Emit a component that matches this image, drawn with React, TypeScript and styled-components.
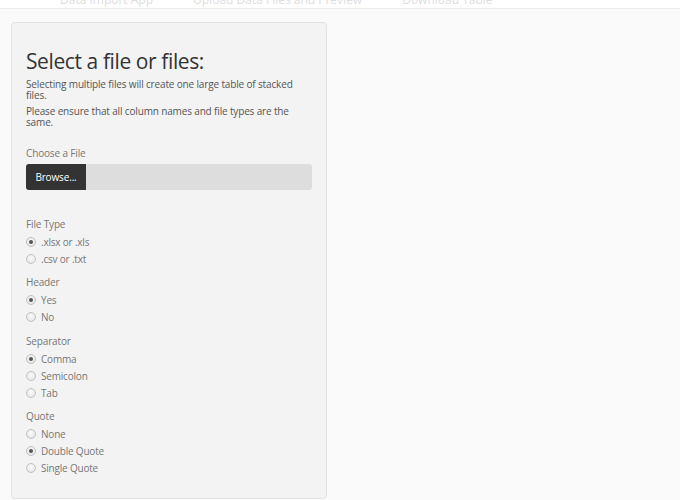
import React from "react";
import styled, { createGlobalStyle } from "styled-components";

const Global = createGlobalStyle`
  html, body { margin: 0; padding: 0; }
  body {
    background: #fafafa;
    font-family: "Open Sans", "Liberation Sans", sans-serif;
    color: #777;
    width: 680px;
    height: 500px;
    overflow: hidden;
  }
`;

const NavBar = styled.div`
  height: 8px;
  background: #ffffff;
  border-bottom: 1px solid #ebebeb;
  overflow: hidden;
  display: flex;
  align-items: flex-end;
  gap: 40px;
  padding-left: 60px;
`;

const NavText = styled.span`
  font-size: 12px;
  line-height: 12px;
  color: #dedede;
  margin-bottom: 2px;
  white-space: nowrap;
`;

const Page = styled.div`
  padding: 13px 0 0 11px;
`;

const Well = styled.div`
  width: 286px;
  height: 440px;
  padding: 26px 14px 9px 14px;
  background: #f3f3f3;
  border: 1px solid #e2e2e2;
  border-radius: 4px;
  display: flex;
  flex-direction: column;
`;

const Title = styled.h3`
  margin: 0 0 6px 0;
  font-size: 21px;
  line-height: 24px;
  letter-spacing: -0.4px;
  font-weight: 400;
  color: #333;
`;

const Para = styled.p`
  margin: 0 0 5px 0;
  font-size: 10px;
  line-height: 11px;
  letter-spacing: -0.15px;
  color: #555;
`;

const FieldLabel = styled.div<{ $lh: number }>`
  font-size: 10px;
  line-height: ${(p) => p.$lh}px;
  letter-spacing: -0.15px;
  color: #777;
`;

const FileGroup = styled.div`
  margin-top: 14px;
  display: flex;
  flex-direction: column;
  gap: 5px;
`;

const FileInput = styled.div`
  display: flex;
  height: 26px;
  background: #dddddd;
  border-radius: 3px;
  overflow: hidden;
`;

const BrowseButton = styled.div`
  width: 60px;
  background: #333333;
  color: #ffffff;
  font-size: 10px;
  letter-spacing: -0.15px;
  display: flex;
  align-items: center;
  justify-content: center;
`;

const RadioGroup = styled.div<{ $top: number }>`
  margin-top: ${(p) => p.$top}px;
  display: flex;
  flex-direction: column;
`;

const RadioRow = styled.div`
  display: flex;
  align-items: center;
  height: 17px;
  gap: 5px;
  font-size: 10px;
  letter-spacing: -0.2px;
  color: #777;
`;

const Circle = styled.span<{ $on: boolean }>`
  box-sizing: border-box;
  width: 10px;
  height: 10px;
  border-radius: 50%;
  border: 1px solid #c2c2c2;
  background: radial-gradient(circle at 50% 40%, #fbfbfb, #e0e0e0);
  display: flex;
  align-items: center;
  justify-content: center;
  &::after {
    content: "";
    width: 4px;
    height: 4px;
    border-radius: 50%;
    background: ${(p) => (p.$on ? "#555" : "transparent")};
  }
`;

type Group = { label: string; options: string[]; selected: number; top: number };

const groups: Group[] = [
  { label: "File Type", options: [".xlsx or .xls", ".csv or .txt"], selected: 0, top: 26 },
  { label: "Header", options: ["Yes", "No"], selected: 0, top: 7 },
  { label: "Separator", options: ["Comma", "Semicolon", "Tab"], selected: 0, top: 8 },
  { label: "Quote", options: ["None", "Double Quote", "Single Quote"], selected: 1, top: 7 },
];

export default function App() {
  return (
    <>
      <Global />
      <NavBar>
        <NavText>Data Import App</NavText>
        <NavText>Upload Data Files and Preview</NavText>
        <NavText>Download Table</NavText>
      </NavBar>
      <Page>
        <Well>
          <Title>Select a file or files:</Title>
          <Para>Selecting multiple files will create one large table of stacked files.</Para>
          <Para>Please ensure that all column names and file types are the same.</Para>
          <FileGroup>
            <FieldLabel $lh={12}>Choose a File</FieldLabel>
            <FileInput>
              <BrowseButton>Browse...</BrowseButton>
            </FileInput>
          </FileGroup>
          {groups.map((g) => (
            <RadioGroup key={g.label} $top={g.top}>
              <FieldLabel $lh={17}>{g.label}</FieldLabel>
              {g.options.map((o, i) => (
                <RadioRow key={o}>
                  <Circle $on={i === g.selected} />
                  {o}
                </RadioRow>
              ))}
            </RadioGroup>
          ))}
        </Well>
      </Page>
    </>
  );
}
